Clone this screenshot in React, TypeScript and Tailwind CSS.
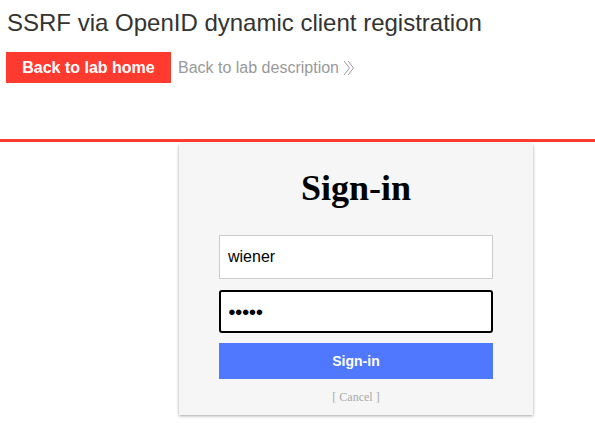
const App = () => {
  return (
    <div className="min-h-[434px] w-[595px] bg-white font-['Liberation_Sans',Arial,sans-serif]">
      {/* Lab header */}
      <div className="px-[7px] pt-[9px]">
        <h2 className="text-[24px] leading-[28px] text-[#333332]">
          SSRF via OpenID dynamic client registration
        </h2>
        <div className="mt-[15px] flex items-center">
          <a className="ml-[-1px] flex h-[31px] w-[165px] items-center justify-center bg-[#ff3b30] text-[16px] font-bold text-white">
            Back to lab home
          </a>
          <a className="ml-[7px] flex items-center text-[16px] text-[#999999]">
            Back to lab description
            <svg width="12" height="16" viewBox="0 0 12 16" className="ml-[4px]" fill="none" stroke="#999999" strokeWidth="1">
              <polyline points="1,1 6.5,8 1,15" />
              <polyline points="5,1 10.5,8 5,15" />
            </svg>
          </a>
        </div>
      </div>
      <div className="mt-[56px] h-[3px] w-full bg-[#ff3b30]" />

      {/* Sign-in card */}
      <div className="ml-[179px] mt-[2px] w-[354px] bg-[#f6f6f6] px-[40px] pb-[9px] pt-[24px] shadow-[0_1px_3px_rgba(0,0,0,0.35)]">
        <h1 className="text-center font-['Liberation_Serif','Times_New_Roman',serif] text-[36px] font-bold leading-[40px] text-black">
          Sign-in
        </h1>
        <div className="mt-[27px] flex h-[44px] items-center border border-[#cccccc] bg-white px-[8px] text-[16px] text-black">
          wiener
        </div>
        <div className="mt-[11px] flex h-[43px] items-center rounded-[3px] border-2 border-black bg-white px-[7px] text-[16px] text-black">
          <span className="text-[13px] tracking-[-1px]">●●●●●</span>
        </div>
        <button className="mt-[10px] h-[36px] w-full bg-[#5078ff] text-[14px] font-bold text-white">
          Sign-in
        </button>
        <div className="mt-[9px] text-center font-['Liberation_Serif','Times_New_Roman',serif] text-[12px] text-[#aaaaaa]">
          [ Cancel ]
        </div>
      </div>
    </div>
  );
};

export default App;
